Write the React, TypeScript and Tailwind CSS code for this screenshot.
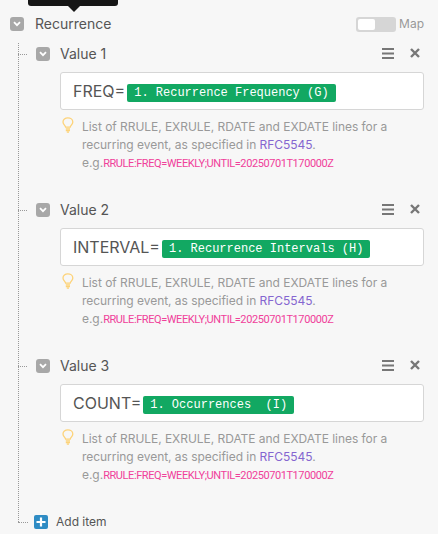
import React from "react";

const Chevron = ({ size }: { size: number }) => (
  <div className="flex items-center justify-center rounded-[3px] bg-[#a8a8a8]" style={{ width: size, height: size }}>
    <svg width="8" height="6" viewBox="0 0 8 6" fill="none">
      <path d="M1 1.2 L4 4.2 L7 1.2" stroke="#fff" strokeWidth="1.8" />
    </svg>
  </div>
);

const Bulb = () => (
  <svg width="12" height="16" viewBox="0 0 12 16" fill="none" stroke="#fdd37a" strokeWidth="1.3">
    <path d="M3.6 10.2 C3.4 8.4 1 7.4 1 4.9 C1 2.6 3.2 0.8 5.8 0.8 C8.6 0.8 10.8 2.6 10.8 4.9 C10.8 7.4 8.4 8.4 8.2 10.2 Z" />
    <path d="M3.8 12 H8 M3.8 13.6 H8 M4.8 15.2 H7" />
  </svg>
);

const Item = ({ name, prefix, tag }: { name: string; prefix: string; tag: string }) => (
  <div className="relative pl-[36px] h-[156px]">
    <div className="absolute left-[18px] top-[11px] w-[9px] border-t border-dotted border-[#999]" />
    <div className="flex items-center h-[22px]">
      <Chevron size={14} />
      <span className="ml-[10px] text-[14px] text-[#555] leading-none">{name}</span>
      <div className="ml-auto mr-[18px] mb-[2px] flex items-center gap-[15px] text-[#777]">
        <svg width="13" height="11" viewBox="0 0 13 11" fill="#777"><rect x="0" y="0" width="12" height="2" /><rect x="0" y="4.5" width="12" height="2" /><rect x="0" y="9" width="12" height="2" /></svg>
        <svg width="10" height="10" viewBox="0 0 10 10" stroke="#777" strokeWidth="2.4"><path d="M1 1 L9 9 M9 1 L1 9" /></svg>
      </div>
    </div>
    <div className="ml-[24px] mr-[14px] mt-[7px] h-[38px] flex items-center rounded-[3px] border border-[#d6d6d6] bg-white pl-[12px]">
      <span className="text-[16px] text-[#555]">{prefix}=</span>
      <span className="ml-[2px] mt-[4px] h-[18px] flex items-center rounded-[2px] bg-[#12a862] px-[7px] text-[12px] text-white whitespace-pre font-['Liberation_Mono',monospace]">{tag}</span>
    </div>
    <div className="ml-[24px] mt-[8px] flex">
      <div className="pl-[2px] -mt-[1px] w-[22px] shrink-0"><Bulb /></div>
      <div className="text-[12px] leading-[18px] text-[#999] tracking-[-0.04px]">
        <div>List of RRULE, EXRULE, RDATE and EXDATE lines for a</div>
        <div>recurring event, as specified in <span className="text-[#8566d0]">RFC5545</span>.</div>
        <div>e.g.<span className="text-[11px] tracking-[-0.42px] text-[#f0409a] font-['Roboto',sans-serif]">RRULE:FREQ=WEEKLY;UNTIL=20250701T170000Z</span></div>
      </div>
    </div>
  </div>
);

export default function App() {
  return (
    <div className="relative w-[438px] h-[534px] overflow-hidden bg-[#f7f7f7] font-['Inter',sans-serif]">
      <div className="absolute left-[28px] top-0 w-[90px] h-[6px] rounded-b-[3px] bg-[#161616]" />
      <div className="absolute left-[68px] top-[6px] w-0 h-0 border-x-[6px] border-x-transparent border-t-[6px] border-t-[#161616]" />
      <div className="px-[10px] pt-[14px] flex items-center h-[43px] pb-[9px]">
        <Chevron size={14} />
        <span className="ml-[11px] text-[14px] text-[#555] leading-none">Recurrence</span>
        <div className="ml-auto mr-[4px] flex items-center gap-[3px]">
          <div className="w-[40px] h-[15px] rounded-[3px] bg-[#d6d6d6] p-[2px]">
            <div className="w-[17px] h-[11px] rounded-[2px] bg-white" />
          </div>
          <span className="text-[12px] text-[#999]">Map</span>
        </div>
      </div>
      <div className="relative">
        <div className="absolute left-[18px] top-0 h-[479px] border-l border-dotted border-[#999]" />
        <Item name="Value 1" prefix="FREQ" tag="1. Recurrence Frequency (G)" />
        <Item name="Value 2" prefix="INTERVAL" tag="1. Recurrence Intervals (H)" />
        <Item name="Value 3" prefix="COUNT" tag="1. Occurrences  (I)" />
        <div className="relative pl-[34px] flex items-center h-[16px] mt-[3px]">
          <div className="absolute left-[18px] top-[8px] w-[10px] border-t border-dotted border-[#999]" />
          <div className="w-[14px] h-[14px] rounded-[2px] bg-[#2f8cc4] flex items-center justify-center">
            <svg width="10" height="10" viewBox="0 0 10 10" stroke="#fff" strokeWidth="2.2"><path d="M5 0.5 V9.5 M0.5 5 H9.5" /></svg>
          </div>
          <span className="ml-[8px] text-[12px] text-[#555]">Add item</span>
        </div>
      </div>
    </div>
  );
}
